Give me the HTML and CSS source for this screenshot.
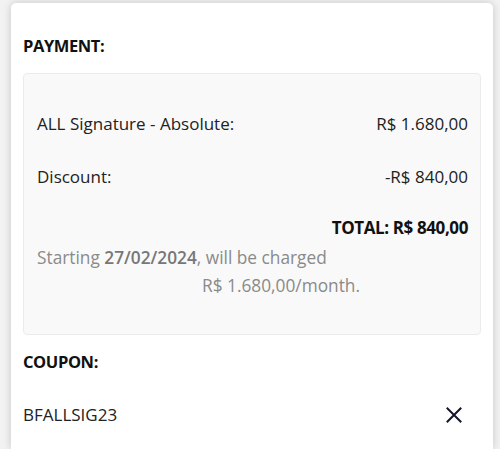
FILE: index.html
```html
<!DOCTYPE html>
<html>
<head>
<meta charset="utf-8">
<link rel="stylesheet" href="styles.css">
</head>
<body>
<div class="card">
  <h2 class="heading">PAYMENT:</h2>
  <div class="summary">
    <div class="row"><span>ALL Signature - Absolute:</span><span>R$ 1.680,00</span></div>
    <div class="row row-discount"><span>Discount:</span><span>-R$ 840,00</span></div>
    <div class="total">TOTAL: R$ 840,00</div>
    <div class="note">
      <div class="note-line">Starting <b>27/02/2024</b>, will be charged</div>
      <div class="note-line note-indent">R$ 1.680,00/month.</div>
    </div>
  </div>
  <h2 class="heading heading-coupon">COUPON:</h2>
  <div class="coupon">
    <span>BFALLSIG23</span>
    <svg class="close" width="16" height="16" viewBox="0 0 16 16"><path d="M1.5 1.5 L14.5 14.5 M14.5 1.5 L1.5 14.5" stroke="#14142b" stroke-width="2" fill="none" stroke-linecap="square"/></svg>
  </div>
</div>
</body>
</html>
```
FILE: styles.css
```css
html, body {
  margin: 0;
  padding: 0;
  background: #f2f2f2;
  height: 100%;
  overflow: hidden;
}
body {
  font-family: "Open Sans", "Noto Sans", sans-serif;
  color: #222;
  padding: 3px 7px 0 11px;
  box-sizing: border-box;
}
.card {
  background: #fff;
  border-radius: 5px 5px 0 0;
  box-shadow: 0 0 8px rgba(0, 0, 0, 0.18);
  padding: 33px 12px 0 12px;
  height: 100%;
  box-sizing: border-box;
}
.heading {
  margin: 0;
  font-size: 16.5px;
  font-weight: 700;
  line-height: 20px;
  letter-spacing: -0.4px;
  color: #111;
}
.summary {
  margin-top: 17px;
  background: #f9f9f9;
  border: 1px solid #ececec;
  border-radius: 4px;
  padding: 40px 12px 34px 13px;
}
.row {
  display: flex;
  justify-content: space-between;
  font-size: 17px;
  line-height: 20px;
}
.row-discount {
  margin-top: 33px;
}
.total {
  margin-top: 31px;
  text-align: right;
  font-weight: 700;
  font-size: 17px;
  line-height: 20px;
  letter-spacing: -0.4px;
  color: #111;
}
.note {
  margin-top: 6px;
  color: #8a8a8a;
  font-size: 17.3px;
  line-height: 28px;
}
.note b {
  font-weight: 600;
  color: #777;
}
.note-indent {
  padding-left: 165px;
}
.heading-coupon {
  margin-top: 17px;
}
.coupon {
  margin-top: 33px;
  display: flex;
  justify-content: space-between;
  align-items: center;
  font-size: 17px;
  line-height: 20px;
  padding-right: 19px;
}
.close {
  display: block;
}
```
